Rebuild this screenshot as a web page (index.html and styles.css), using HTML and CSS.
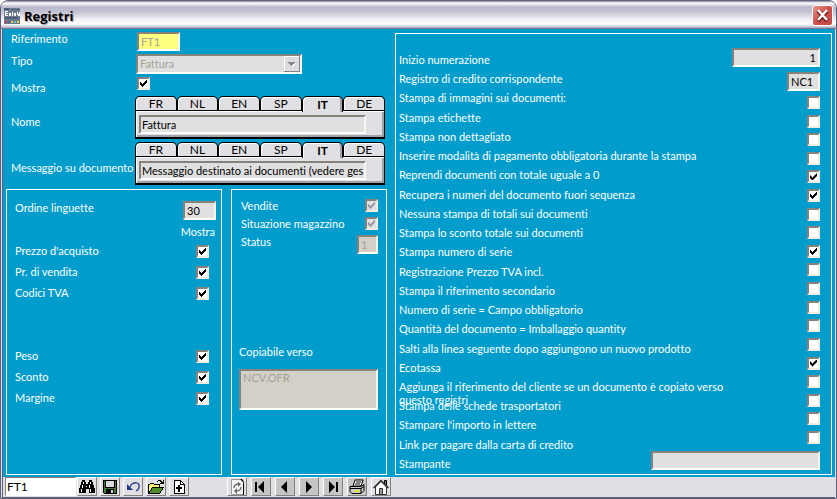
FILE: index.html
```html
<!DOCTYPE html>
<html lang="it">

<head>
    <meta charset="utf-8">
    <meta name="viewport" content="width=device-width,initial-scale=1.0">
    <title>Registri</title>
    <link rel="stylesheet" href="styles.css">
</head>

<body>
    <div class="window">
        <header class="title-bar">
            <svg class="app-icon" width="16" height="16" viewBox="0 0 16 16" shape-rendering="crispEdges">
                <path fill="#6b7a8c" d="M0 0h16v16H0z" />
                <path fill="#4c5d75" d="M0 0h5v2H0zM7 1h9v1H7zM1 9h13v2H1z" />
                <path fill="#fff" d="M1 3h3v1H2v1h2v1H2v1h2v1H1zM5 5h2v3H5zM8 4h1v4H8zM10 5h2v3h-2zM13 4h1v2h1V4h1v4h-2V7h-1z" />
                <path fill="#d33" d="M1 13h2v2H1z" />
                <path fill="#36c" d="M4 13h2v2H4z" />
                <path fill="#ec3" d="M7 13h2v2H7zM13 13h2v2h-2z" />
                <path fill="#5cf" d="M10 13h2v2h-2z" />
            </svg>
            <h1>Registri</h1>
            <button class="close" type="button" aria-label="Chiudi">
                <svg width="21" height="21" viewBox="0 0 21 21">
                    <path d="M6 6l9 10M15 6l-9 10" stroke="#6b1a1a" stroke-width="4" />
                    <path d="M6 5l9 10M15 5l-9 10" stroke="#fff" stroke-width="2.4" />
                </svg>
            </button>
        </header>

        <main class="content">
            <div class="left">
                <div class="row">
                    <label for="riferimento">Riferimento</label>
                    <input class="field reference" id="riferimento" value="FT1" disabled>
                </div>
                <div class="row">
                    <label for="tipo">Tipo</label>
                    <div class="select-box">
                        <select class="field" id="tipo" disabled>
                            <option>Fattura</option>
                        </select>
                        <svg class="arrow" width="16" height="16" viewBox="0 0 16 16" shape-rendering="crispEdges">
                            <path fill="#dcdbe0" d="M0 0h16v16H0z" />
                            <path fill="#fff" d="M0 0h15v1H1v14H0z" />
                            <path fill="#85848c" d="M15 0h1v16H0v-1h15z" />
                            <path fill="#fff" d="M6 8h5v1H6zM7 9h3v1H7zM8 10h1v1H8z" />
                            <path fill="#85848c" d="M4 6h7v1H4zM5 7h5v1H5zM6 8h3v1H6zM7 9h1v1H7z" />
                        </svg>
                    </div>
                </div>
                <div class="row show-row">
                    <label for="mostra">Mostra</label>
                    <input type="checkbox" id="mostra" checked>
                </div>
                <div class="row tab-row">
                    <label for="nome">Nome</label>
                    <div class="tab-box">
                        <div class="tabs">
                            <button type="button">FR</button>
                            <button type="button">NL</button>
                            <button type="button">EN</button>
                            <button type="button">SP</button>
                            <button type="button" class="active">IT</button>
                            <button type="button">DE</button>
                        </div>
                        <div class="tab-body">
                            <input class="field" id="nome" value="Fattura">
                        </div>
                    </div>
                </div>
                <div class="row tab-row">
                    <label for="messaggio">Messaggio su documento</label>
                    <div class="tab-box">
                        <div class="tabs">
                            <button type="button">FR</button>
                            <button type="button">NL</button>
                            <button type="button">EN</button>
                            <button type="button">SP</button>
                            <button type="button" class="active">IT</button>
                            <button type="button">DE</button>
                        </div>
                        <div class="tab-body">
                            <input class="field" id="messaggio" value="Messaggio destinato ai documenti (vedere ges">
                        </div>
                    </div>
                </div>

                <div class="panels">
                    <section class="panel order-panel">
                        <div class="order-row">
                            <label for="ordine">Ordine linguette</label>
                            <input class="field" id="ordine" value="30">
                        </div>
                        <div class="column-title">Mostra</div>
                        <div class="check-row"><label for="prezzo">Prezzo d'acquisto</label><input type="checkbox" id="prezzo" checked></div>
                        <div class="check-row"><label for="vendita">Pr. di vendita</label><input type="checkbox" id="vendita" checked></div>
                        <div class="check-row"><label for="tva">Codici TVA</label><input type="checkbox" id="tva" checked></div>
                        <div class="check-row second-group"><label for="peso">Peso</label><input type="checkbox" id="peso" checked></div>
                        <div class="check-row"><label for="sconto">Sconto</label><input type="checkbox" id="sconto" checked></div>
                        <div class="check-row"><label for="margine">Margine</label><input type="checkbox" id="margine" checked></div>
                    </section>

                    <section class="panel stock-panel">
                        <div class="stock-row"><label for="vendite">Vendite</label><input type="checkbox" id="vendite" checked disabled></div>
                        <div class="stock-row"><label for="magazzino">Situazione magazzino</label><input type="checkbox" id="magazzino" checked disabled></div>
                        <div class="stock-row"><label for="status">Status</label><input class="field" id="status" value="1" disabled></div>
                        <label class="copy-label" for="copia">Copiabile verso</label>
                        <textarea class="field" id="copia" disabled>NCV.OFR</textarea>
                    </section>
                </div>
            </div>

            <section class="panel options">
                <div class="option-labels">
                    <label for="numerazione">Inizio numerazione</label>
                    <label for="credito">Registro di credito corrispondente</label>
                    <label for="o1">Stampa di immagini sui documenti:</label>
                    <label for="o2">Stampa etichette</label>
                    <label for="o3">Stampa non dettagliato</label>
                    <label for="o4">Inserire modalità di pagamento obbligatoria durante la stampa</label>
                    <label for="o5">Reprendi documenti con totale uguale a 0</label>
                    <label for="o6">Recupera i numeri del documento fuori sequenza</label>
                    <label for="o7">Nessuna stampa di totali sui documenti</label>
                    <label for="o8">Stampa lo sconto totale sui documenti</label>
                    <label for="o9">Stampa numero di serie</label>
                    <label for="o10">Registrazione Prezzo TVA incl.</label>
                    <label for="o11">Stampa il riferimento secondario</label>
                    <label for="o12">Numero di serie = Campo obbligatorio</label>
                    <label for="o13">Quantità del documento = Imballaggio quantity</label>
                    <label for="o14">Salti alla linea seguente dopo aggiungono un nuovo prodotto</label>
                    <label for="o15">Ecotassa</label>
                    <label for="o16">Aggiunga il riferimento del cliente se un documento è copiato verso questo registri</label>
                    <label for="o17">Stampa delle schede trasportatori</label>
                    <label for="o18">Stampare l'importo in lettere</label>
                    <label for="o19">Link per pagare dalla carta di credito</label>
                    <label for="stampante">Stampante</label>
                </div>
                <div class="option-controls">
                    <input class="field" id="numerazione" value="1">
                    <input class="field" id="credito" value="NC1">
                    <div class="option-checks">
                        <input type="checkbox" id="o1">
                        <input type="checkbox" id="o2">
                        <input type="checkbox" id="o3">
                        <input type="checkbox" id="o4">
                        <input type="checkbox" id="o5" checked>
                        <input type="checkbox" id="o6" checked>
                        <input type="checkbox" id="o7">
                        <input type="checkbox" id="o8">
                        <input type="checkbox" id="o9" checked>
                        <input type="checkbox" id="o10">
                        <input type="checkbox" id="o11">
                        <input type="checkbox" id="o12">
                        <input type="checkbox" id="o13">
                        <input type="checkbox" id="o14">
                        <input type="checkbox" id="o15" checked>
                        <input type="checkbox" id="o16">
                        <input type="checkbox" id="o17">
                        <input type="checkbox" id="o18">
                        <input type="checkbox" id="o19">
                    </div>
                    <input class="field" id="stampante" value="">
                </div>
            </section>
        </main>

        <footer class="toolbar">
            <input class="search" value="FT1" aria-label="Cerca">
            <div class="tools">
                <button type="button" aria-label="Cerca">
                    <svg width="16" height="16" viewBox="0 0 16 16" shape-rendering="crispEdges">
                        <path d="M3 1h3v2h1v2h2V3h1V1h3v2h1v3h1v3h1v5h-6v-4H7v4H0V9h1V6h1V3h1z" />
                        <path fill="#fff" d="M4 3h1v2H4zM11 3h1v2h-1zM3 6h1v3H3zM10 6h1v3h-1zM2 10h1v3H2zM11 10h1v3h-1zM7 7h1v1H7z" />
                    </svg>
                </button>
                <button type="button" aria-label="Salva">
                    <svg width="16" height="16" viewBox="0 0 16 16" shape-rendering="crispEdges">
                        <path d="M1 1h14v14H2l-1-1z" />
                        <path fill="#3f7d32" d="M2 2h1v7h10V2h1v12H2z" />
                        <path fill="#dcdbe0" d="M4 2h8v6H4z" />
                        <path d="M4 10h8v5H4z" />
                        <path fill="#dcdbe0" d="M9 11h2v3H9z" />
                        <path fill="#b33" d="M13 4h1v1h-1zM2 8h1v1H2zM12 9h1v1h-1z" />
                    </svg>
                </button>
                <button type="button" aria-label="Annulla">
                    <svg width="16" height="16" viewBox="0 0 16 16">
                        <path d="M5 8c1-3 4-5 7-4 3 1 3 6-1 8" fill="none" stroke="#22398c" stroke-width="1.3" />
                        <path d="M2 5v6h6z" fill="#22398c" />
                    </svg>
                </button>
                <button type="button" aria-label="Apri">
                    <svg width="16" height="16" viewBox="0 0 16 16" shape-rendering="crispEdges">
                        <path fill="#ffef70" stroke="#000" d="M.5 14V5.500h1l1-1h3l1 1h5v3" />
                        <path fill="#4f8a2b" stroke="#000" d="M.5 14.500l4-6h11l-4 6z" />
                        <path d="M9 2h1V1h3v1h1v1h1V1h1v4h-4V4h1V3h-1V2h-2v1H9z" />
                    </svg>
                </button>
                <button type="button" aria-label="Nuovo">
                    <svg width="16" height="16" viewBox="0 0 16 16" shape-rendering="crispEdges">
                        <path fill="#fff" stroke="#000" d="M3.500 1.500h6l4 4v9h-10z" />
                        <path d="M9 1h1v4h4v1H9zM8 6h1v2h2v2H9v3H7v-3H5V8h2V6z" />
                    </svg>
                </button>
            </div>
            <div class="tools navigation">
                <button type="button" aria-label="Aggiorna">
                    <svg width="16" height="16" viewBox="0 0 16 16">
                        <path fill="#f4f3f5" stroke="#999" d="M2.500.5h9l3 3v12h-12z" />
                        <path d="M11 0l4 4h-1v12h1V3l-2-3z" />
                        <path d="M5 9c0-3 2-4 5-4M12 8c0 3-2 4-5 4" fill="none" stroke="#666" stroke-width="1.300" />
                        <path d="M9 3v5l3-3zM8 9v6l-3-3z" fill="#666" />
                    </svg>
                </button>
                <button type="button" class="nav" aria-label="Primo">
                    <svg width="16" height="16" viewBox="0 0 16 16"><path d="M2 3h2v10H2zM11 2v12L5 8z" /></svg>
                </button>
                <button type="button" class="nav" aria-label="Precedente">
                    <svg width="16" height="16" viewBox="0 0 16 16"><path d="M10 2v12L4 8z" /></svg>
                </button>
                <button type="button" class="nav" aria-label="Successivo">
                    <svg width="16" height="16" viewBox="0 0 16 16"><path d="M5 2v12l6-6z" /></svg>
                </button>
                <button type="button" class="nav" aria-label="Ultimo">
                    <svg width="16" height="16" viewBox="0 0 16 16"><path d="M4 2v12l6-6zM11 3h2v10h-2z" /></svg>
                </button>
                <button type="button" class="nav" aria-label="Stampa">
                    <svg width="16" height="16" viewBox="0 0 16 16">
                        <path fill="#fff" stroke="#000" d="M4 7l2-6h8l-2 6z" />
                        <path d="M7 3h5M6 5h5" stroke="#000" />
                        <path fill="#ccc" stroke="#000" d="M1 7.500h11l3-2v6l-3 3H3l-2-2z" />
                        <path d="M1 9.500h11l3-2M12 9v5" stroke="#000" fill="none" />
                        <path d="M6 12h4" stroke="#e6e600" stroke-width="2" />
                    </svg>
                </button>
                <button type="button" aria-label="Home">
                    <svg width="16" height="16" viewBox="0 0 16 16">
                        <path fill="#777" stroke="#000" d="M11.500 5V1.500h2V7" />
                        <path fill="#fff" stroke="#333" d="M2.500 8v7.500h11V8L8 2.500z" />
                        <path fill="none" stroke="#333" stroke-width="1.500" d="M.5 9L8 1.500 15.500 9" />
                        <path fill="#999" stroke="#333" d="M6.500 15.500v-6h3v6z" />
                    </svg>
                </button>
            </div>
        </footer>
    </div>
</body>

</html>
```
FILE: styles.css
```css
* {
    box-sizing: border-box;
}

body {
    margin: 0;
    background: #fff;
    font-family: Lato, "Liberation Sans", Arial, sans-serif;
    font-size: 11px;
    font-variant-ligatures: none;
    line-height: 14px;
    color: #fff;
}

input,
select,
textarea,
button {
    margin: 0;
    padding: 0;
    font: inherit;
    font-variant-ligatures: none;
    border-radius: 0;
}

label {
    white-space: nowrap;
}

.window {
    display: flex;
    flex-direction: column;
    min-height: 100vh;
    border: 1px solid #5f5e7c;
    border-radius: 8px 8px 0 0;
    background: #e0dfe4;
    overflow: hidden;
}

/* title bar */

.title-bar {
    display: flex;
    align-items: center;
    height: 28px;
    padding: 2px 3px 0;
    border-bottom: 1px solid #77768f;
    background: linear-gradient(#8a89a3, #fff 8%, #b9b8cc 22%, #c4c3d4 40%, #f4f4f8 70%, #fff 86%, #a9a8bd);
}

.title-bar h1 {
    flex: 1;
    margin: 0 0 0 4px;
    font: bold 13px/16px "Open Sans", sans-serif;
    color: #000;
    text-shadow: 1px 1px 1px #9a99ad;
}

.close {
    width: 21px;
    height: 21px;
    border: 1px solid #fff;
    border-radius: 3px;
    background: linear-gradient(135deg, #e39a8c, #cc4f4b 50%, #c4484a);
}

.close svg {
    display: block;
    margin: -1px;
}

/* form area */

.content {
    display: flex;
    flex: 1;
    gap: 8px;
    margin: 0 1px;
    padding: 3px 3px 2px;
    border-left: 1px solid #5f5e7c;
    background: #009ccc;
}

.left {
    display: flex;
    flex: none;
    flex-direction: column;
    gap: 3px;
    width: 381px;
}

.row {
    display: flex;
    align-items: flex-start;
}

.row > label {
    width: 129px;
    padding-left: 5px;
}

.field {
    height: 19px;
    padding: 0 2px;
    border: 2px solid;
    border-color: #85817b #f6f5ee #fff #85817b;
    background: #e0e0e0;
    color: #000;
    outline: none;
    appearance: none;
}

.field:disabled {
    color: #a5a195;
    opacity: 1;
}

.reference {
    width: 43px;
    margin-left: 2px;
}

.reference:disabled {
    background: #ffff80;
}

.select-box {
    position: relative;
    width: 166px;
    margin-left: 1px;
}

.select-box select {
    display: block;
    width: 100%;
    height: 20px;
}

.arrow {
    position: absolute;
    top: 2px;
    right: 2px;
}

.show-row {
    height: 16px;
}

.show-row label {
    margin-top: 4px;
}

.show-row input {
    margin-left: 2px;
}

input[type="checkbox"] {
    flex: none;
    width: 13px;
    height: 13px;
    padding: 1px;
    border: 2px solid;
    border-color: #85817b #f1ece0 #f1ece0 #85817b;
    background: #fff;
    appearance: none;
}

input[type="checkbox"]:checked::before {
    content: "";
    display: block;
    width: 7px;
    height: 7px;
    background: #000;
    clip-path: polygon(0 2px, 1px 2px, 1px 3px, 2px 3px, 2px 4px, 3px 4px, 3px 3px, 4px 3px, 4px 2px, 5px 2px, 5px 1px, 6px 1px, 6px 0, 7px 0, 7px 3px, 6px 3px, 6px 4px, 5px 4px, 5px 5px, 4px 5px, 4px 6px, 3px 6px, 3px 7px, 2px 7px, 2px 6px, 1px 6px, 1px 5px, 0 5px);
}

input[type="checkbox"]:disabled {
    background: #e0dfe4;
}

input[type="checkbox"]:disabled::before {
    background: #9d9ba3;
}

/* language tabs */

.tab-row > label {
    align-self: center;
    margin-top: 9px;
}

.tab-box {
    flex: none;
    width: 250px;
    color: #000;
}

.tabs {
    display: flex;
    height: 14px;
}

.tabs button {
    flex: 1;
    border: 1px solid #000;
    border-bottom: none;
    border-radius: 5px 5px 0 0;
    background: #e0dfe4;
    box-shadow: inset 1px 1px #fff;
    font-size: 12px;
    line-height: 12px;
    color: #000;
}

.tabs .active {
    z-index: 1;
    height: 16px;
    font-weight: bold;
    box-shadow: inset 1px 1px #fff, inset -2px 0 #a3a2ab;
}

.tab-body {
    height: 29px;
    padding: 4px 3px;
    border: 1px solid #000;
    border-bottom-width: 2px;
    background: #e0dfe4;
    box-shadow: inset 1px 1px #fff, inset -2px -2px #a3a2ab;
}

.tab-body .field {
    display: block;
    width: 227px;
    padding: 0 0 0 1px;
}

/* framed panels */

.panel {
    border: 1px solid #fff;
}

.panels {
    display: flex;
    flex: 1;
    gap: 9px;
    margin-top: 1px;
}

.order-panel {
    flex: none;
    width: 216px;
    padding: 11px 5px 0 8px;
}

.order-row {
    display: flex;
    justify-content: space-between;
}

.order-row .field {
    width: 33px;
}

.column-title {
    margin: 5px 1px 5px 0;
    text-align: right;
}

.check-row {
    display: flex;
    justify-content: space-between;
    height: 21px;
    padding-right: 7px;
}

.check-row input {
    margin-top: 1px;
}

.second-group {
    margin-top: 42px;
}

.stock-panel {
    flex: 1;
    padding: 9px 8px 0 7px;
}

.stock-row {
    display: flex;
    justify-content: space-between;
    height: 18px;
    padding-left: 2px;
}

.stock-row .field {
    width: 21px;
}

.stock-row .field:disabled,
textarea:disabled {
    background: #d4d0c8;
}

.copy-label {
    display: block;
    margin: 92px 0 10px;
}

textarea {
    display: block;
    width: 100%;
    resize: none;
}

textarea.field {
    height: 41px;
}

/* document options */

.options {
    display: flex;
    flex: 1;
    justify-content: space-between;
    margin-top: 1px;
    padding: 0 11px 0 3px;
}

.option-labels {
    display: flex;
    flex-direction: column;
    justify-content: space-between;
    width: 325px;
    padding: 19px 0 3px;
    line-height: 13px;
}

.option-labels label {
    height: 14px;
    white-space: normal;
}

.option-controls {
    display: flex;
    flex-direction: column;
    align-items: flex-end;
    width: 88px;
    padding: 14px 0 4px;
}

#numerazione {
    width: 88px;
    text-align: right;
}

#credito {
    width: 33px;
    margin: 5px 0;
}

.option-checks {
    display: flex;
    flex: 1;
    flex-direction: column;
    justify-content: space-between;
    margin-bottom: 7px;
}

#stampante {
    width: 169px;
}

/* bottom bar */

.toolbar {
    display: flex;
    margin: 0 1px;
    padding-left: 2px;
    height: 21px;
    border: solid #5f5e7c;
    border-width: 0 0 1px 1px;
}

.search {
    width: 71px;
    height: 19px;
    padding: 0 1px;
    border: 1px solid #85817b;
    border-color: #85817b #fff #fff #85817b;
    background: #fff;
    font-size: 12px;
    color: #000;
}

.tools {
    display: flex;
    gap: 3px;
    margin-left: 1px;
}

.navigation {
    gap: 4px;
    margin-left: 38px;
}

.tools button {
    width: 20px;
    height: 19px;
    border: 1px solid;
    border-color: #fff #85817b #85817b #fff;
    background: #e0dfe4;
}

.tools .nav {
    background: #c6c5c6;
}

.tools svg {
    display: block;
    margin: 0 auto;
}
```
